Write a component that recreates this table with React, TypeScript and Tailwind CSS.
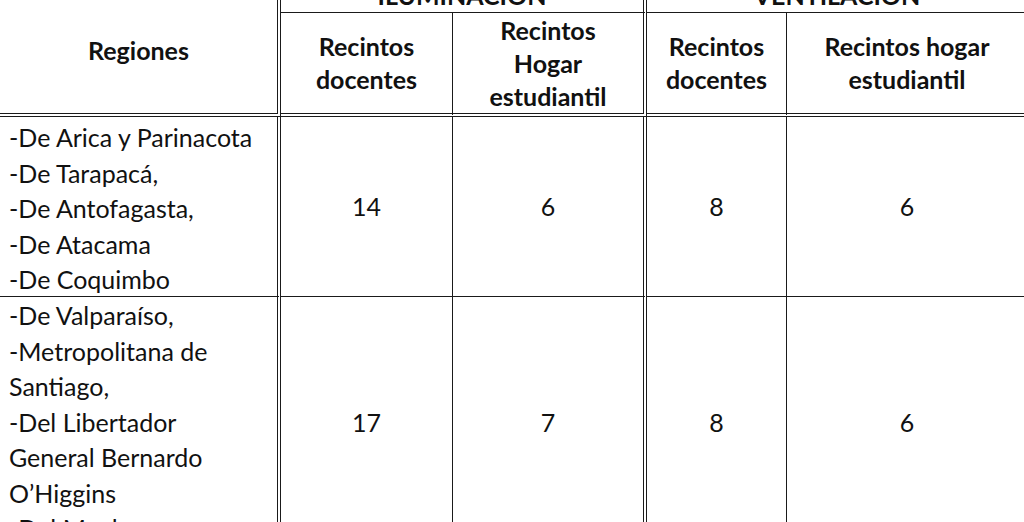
import React from "react";

const font = { fontFamily: "Lato, 'Open Sans', sans-serif" };

export default function App() {
  const cell = "border-[#1a1a1a] border-double overflow-hidden";
  return (
    <div className="w-[1024px] h-[522px] overflow-hidden bg-white text-[#111]" style={font}>
      <div className="w-[1028px] mt-[-28px] grid grid-cols-[281px_172px_194px_140px_241px] grid-rows-[41px_104px_180px_260px] text-[25px]">
        {/* Regiones header */}
        <div className={`${cell} row-span-2 border-r-4 border-b-4 flex items-center justify-center pt-[15px] font-bold leading-[33px]`}>
          Regiones
        </div>
        <div className={`${cell} col-span-2 border-r-4 border-b flex items-end justify-center font-bold leading-[33px]`}>
          ILUMINACIÓN
        </div>
        <div className={`${cell} col-span-2 border-r border-b flex items-end justify-center font-bold leading-[33px]`}>
          VENTILACIÓN
        </div>

        {/* Sub headers */}
        <div className={`${cell} border-r border-b-4 flex items-center justify-center text-center font-bold leading-[33px]`}>
          Recintos<br />docentes
        </div>
        <div className={`${cell} border-r-4 border-b-4 flex items-center justify-center text-center font-bold leading-[33px]`}>
          Recintos<br />Hogar<br />estudiantil
        </div>
        <div className={`${cell} border-r border-b-4 flex items-center justify-center text-center font-bold leading-[33px]`}>
          Recintos<br />docentes
        </div>
        <div className={`${cell} border-r border-b-4 flex items-center justify-center text-center font-bold leading-[33px]`}>
          Recintos hogar<br />estudiantil
        </div>

        {/* Row 1 */}
        <div className={`${cell} border-r-4 border-b pl-[9px] pt-[3px] leading-[35.5px] whitespace-nowrap`}>
          -De Arica y Parinacota<br />-De Tarapacá,<br />-De Antofagasta,<br />-De Atacama<br />-De Coquimbo
        </div>
        <div className={`${cell} border-r border-b flex items-center justify-center`}>14</div>
        <div className={`${cell} border-r-4 border-b flex items-center justify-center`}>6</div>
        <div className={`${cell} border-r border-b flex items-center justify-center`}>8</div>
        <div className={`${cell} border-r border-b flex items-center justify-center`}>6</div>

        {/* Row 2 */}
        <div className={`${cell} border-r-4 border-b pl-[9px] pt-[1px] leading-[35.5px] whitespace-nowrap`}>
          -De Valparaíso,<br />-Metropolitana de<br />Santiago,<br />-Del Libertador<br />General Bernardo<br />O’Higgins<br />-Del Maule
        </div>
        <div className={`${cell} border-r border-b flex items-start justify-center pt-[107px]`}>17</div>
        <div className={`${cell} border-r-4 border-b flex items-start justify-center pt-[107px]`}>7</div>
        <div className={`${cell} border-r border-b flex items-start justify-center pt-[107px]`}>8</div>
        <div className={`${cell} border-r border-b flex items-start justify-center pt-[107px]`}>6</div>
      </div>
    </div>
  );
}
